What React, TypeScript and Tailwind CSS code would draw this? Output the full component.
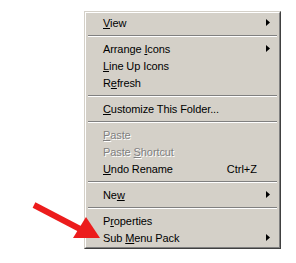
import React from "react";

type Item =
  | { sep: true }
  | { sep?: false; pre: string; key: string; post: string; shortcut?: string; sub?: boolean; disabled?: boolean };

const items: Item[] = [
  { pre: "", key: "V", post: "iew", sub: true },
  { sep: true },
  { pre: "Arrange ", key: "I", post: "cons", sub: true },
  { pre: "", key: "L", post: "ine Up Icons" },
  { pre: "R", key: "e", post: "fresh" },
  { sep: true },
  { pre: "", key: "C", post: "ustomize This Folder..." },
  { sep: true },
  { pre: "", key: "P", post: "aste", disabled: true },
  { pre: "Paste ", key: "S", post: "hortcut", disabled: true },
  { pre: "", key: "U", post: "ndo Rename", shortcut: "Ctrl+Z" },
  { sep: true },
  { pre: "Ne", key: "w", post: "", sub: true },
  { sep: true },
  { pre: "P", key: "r", post: "operties" },
  { pre: "Sub ", key: "M", post: "enu Pack", sub: true },
];

function SubArrow() {
  return (
    <svg width="4" height="7" viewBox="0 0 4 7" className="block">
      <path d="M0 0 L4 3.5 L0 7 Z" fill="#000" />
    </svg>
  );
}

export default function App() {
  return (
    <div className="relative w-[296px] h-[263px] bg-white overflow-hidden">
      <div className="pl-[84px] pt-[11px]">
        <div className="w-[197px] border border-t-[#d4d0c8] border-l-[#d4d0c8] border-r-[#404040] border-b-[#404040]">
          <div className="border border-t-white border-l-white border-r-[#808080] border-b-[#808080] bg-[#d4d0c8] p-px font-['Tahoma','Liberation_Sans',sans-serif] text-[11px] text-black">
            {items.map((it, i) =>
              it.sep ? (
                <div key={i} className="h-[9px] flex flex-col justify-center px-px">
                  <div className="h-px bg-[#808080]" />
                  <div className="h-px bg-white" />
                </div>
              ) : (
                <div key={i} className="h-[17px] flex items-center pl-[16px] pr-[8px]">
                  <span
                    className={
                      "flex-1 leading-none whitespace-nowrap pt-px tracking-[-0.1px] " +
                      (it.disabled ? "text-[#808080] [text-shadow:1px_1px_0_#ffffff]" : "")
                    }
                  >
                    {it.pre}
                    <span className="underline underline-offset-[1px]">{it.key}</span>
                    {it.post}
                  </span>
                  {it.shortcut ? <span className="leading-none pt-px mr-[13px]">{it.shortcut}</span> : null}
                  {it.sub ? <SubArrow /> : null}
                </div>
              )
            )}
          </div>
        </div>
      </div>
      <svg className="absolute left-0 top-0 pointer-events-none" width="296" height="263" viewBox="0 0 296 263">
        <line x1="34" y1="205" x2="80" y2="229" stroke="#ec1c1c" strokeWidth="6" />
        <polygon points="86,217 73,238 100,238" fill="#ec1c1c" />
      </svg>
    </div>
  );
}
